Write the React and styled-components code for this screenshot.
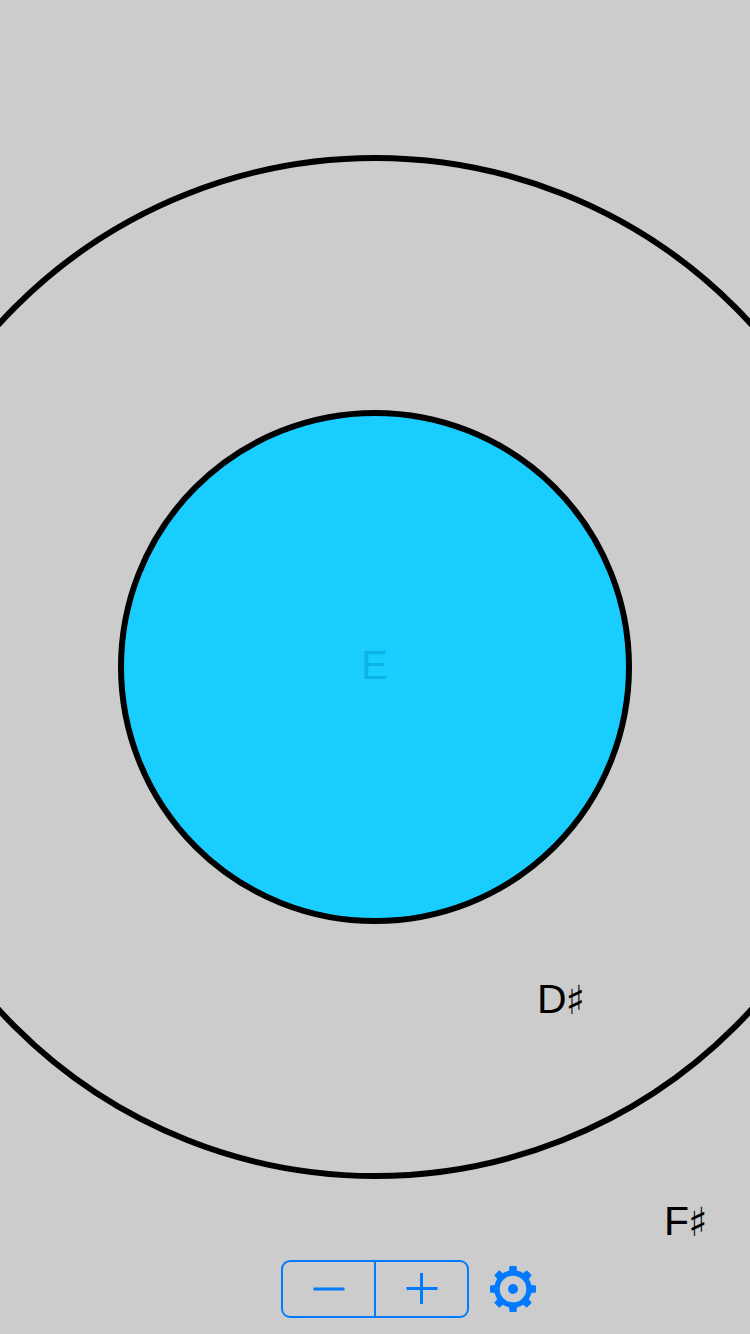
import React from "react";
import styled, { createGlobalStyle } from "styled-components";

const Global = createGlobalStyle`
  html, body { margin: 0; padding: 0; background: #cccccc; }
`;

const Stage = styled.main`
  position: relative;
  width: 750px;
  height: 1334px;
  overflow: hidden;
  background: #cccccc;
  display: flex;
  align-items: center;
  justify-content: center;
  font-family: "Liberation Sans", Arial, sans-serif;
`;

const Ring = styled.div`
  flex: none;
  box-sizing: border-box;
  width: ${(p) => p.$size}px;
  height: ${(p) => p.$size}px;
  border: 6px solid #000;
  border-radius: 50%;
  background: ${(p) => p.$fill || "transparent"};
  display: flex;
  align-items: center;
  justify-content: center;
`;

const TargetNote = styled.span`
  font-size: 40px;
  line-height: 46px;
  color: #0cb4e6;
  margin-top: -5px;
  margin-right: 1px;
`;

const Note = styled.div`
  position: absolute;
  left: ${(p) => p.$x}px;
  top: ${(p) => p.$y}px;
  font-size: 41px;
  line-height: 46px;
  color: #000;
  white-space: nowrap;
`;

const Sharp = styled.span`
  font-family: "DejaVu Sans", sans-serif;
  font-size: 40px;
  font-weight: 700;
  line-height: 0;
  vertical-align: -1px;
  margin-left: -1px;
`;

const Toolbar = styled.div`
  position: absolute;
  left: 281px;
  top: 1260px;
  display: flex;
  align-items: center;
  gap: 19px;
`;

const Stepper = styled.div`
  box-sizing: border-box;
  width: 188px;
  height: 58px;
  border: 2px solid #007aff;
  border-radius: 9px;
  display: flex;
`;

const StepButton = styled.button`
  flex: 1;
  padding: 0;
  border: 0;
  background: none;
  display: flex;
  align-items: center;
  justify-content: center;
  & + & {
    border-left: 2px solid #007aff;
  }
`;

const Gear = styled.svg`
  display: block;
  width: 50px;
  height: 50px;
  color: #007aff;
`;

const teeth = [0, 45, 90, 135, 180, 225, 270, 315];

export default function App() {
  return (
    <Stage>
      <Global />
      <Ring $size={1024}>
        <Ring $size={514} $fill="#19cdff">
          <TargetNote>E</TargetNote>
        </Ring>
      </Ring>
      <Note $x={537} $y={976}>
        D<Sharp>♯</Sharp>
      </Note>
      <Note $x={664} $y={1198}>
        F<Sharp>♯</Sharp>
      </Note>
      <Toolbar>
        <Stepper>
          <StepButton aria-label="minus">
            <svg width="32" height="32" viewBox="0 0 32 32">
              <path d="M0.5 16H31.5" stroke="#007aff" strokeWidth="3" />
            </svg>
          </StepButton>
          <StepButton aria-label="plus">
            <svg width="32" height="32" viewBox="0 0 32 32">
              <path d="M0.5 15.5H31.5M15.5 0V31" stroke="#007aff" strokeWidth="3" />
            </svg>
          </StepButton>
        </Stepper>
        <Gear viewBox="0 0 50 50" aria-label="settings">
          <circle cx="25" cy="25" r="16" fill="none" stroke="currentColor" strokeWidth="5.4" />
          <circle cx="25" cy="25" r="5" fill="currentColor" />
          {teeth.map((a) => (
            <path
              key={a}
              d="M20.8 9L21.5 2H28.5L29.2 9Z"
              fill="currentColor"
              transform={`rotate(${a} 25 25)`}
            />
          ))}
        </Gear>
      </Toolbar>
    </Stage>
  );
}
